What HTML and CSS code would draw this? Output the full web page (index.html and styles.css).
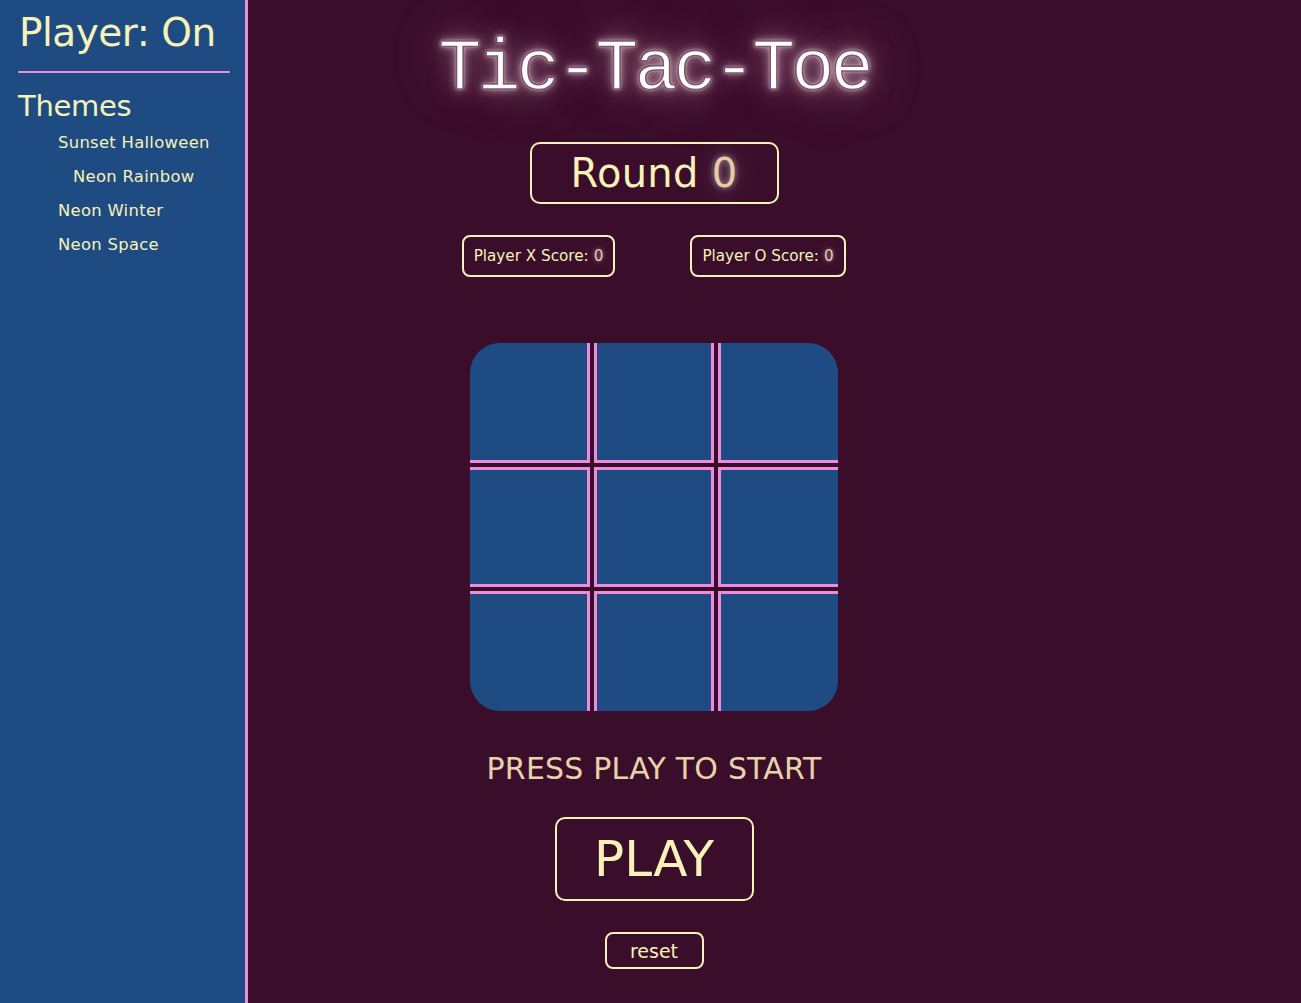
FILE: index.html
```html
<!DOCTYPE html>
<html>
<head>
<meta charset="utf-8">
<link rel="stylesheet" href="styles.css">
</head>
<body>
<div class="page">
  <aside class="sidebar">
    <div class="player">Player: On</div>
    <div class="rule"></div>
    <div class="themes-title">Themes</div>
    <ul class="themes">
      <li>Sunset Halloween</li>
      <li class="indent">Neon Rainbow</li>
      <li>Neon Winter</li>
      <li>Neon Space</li>
    </ul>
  </aside>
  <main class="main">
    <h1 class="title">Tic-Tac-Toe</h1>
    <div class="round">Round <span class="num">0</span></div>
    <div class="scores">
      <div class="score score-x">Player X Score: <span class="num-s">0</span></div>
      <div class="score score-o">Player O Score: <span class="num-s">0</span></div>
    </div>
    <div class="board">
      <div class="cell c1"></div>
      <div class="cell c2"></div>
      <div class="cell c3"></div>
      <div class="cell c4"></div>
      <div class="cell c5"></div>
      <div class="cell c6"></div>
      <div class="cell c7"></div>
      <div class="cell c8"></div>
      <div class="cell c9"></div>
    </div>
    <div class="message">PRESS PLAY TO START</div>
    <button class="play">PLAY</button>
    <button class="reset">reset</button>
  </main>
</div>
</body>
</html>
```
FILE: styles.css
```css
html, body {
  margin: 0;
  padding: 0;
  background: #3a0e2b;
  font-family: "DejaVu Sans", "Noto Sans", sans-serif;
  color: #f7f2b8;
}
.page {
  display: flex;
  min-height: 1003px;
}
.sidebar {
  flex: 0 0 245px;
  background: #1f4b83;
  border-right: 3px solid #ee8cdc;
  padding: 0 15px 0 18px;
  box-sizing: border-box;
  width: 248px;
}
.player {
  font-size: 39px;
  line-height: 1;
  padding-top: 13px;
  padding-left: 1px;
  letter-spacing: -0.5px;
}
.rule {
  height: 2px;
  background: #ee8cdc;
  margin-top: 19px;
  width: 212px;
}
.themes-title {
  font-size: 29px;
  line-height: 1;
  margin-top: 19px;
  letter-spacing: -0.3px;
}
.themes {
  list-style: none;
  margin: 5px 0 0 0;
  padding: 0 0 0 40px;
}
.themes li {
  font-size: 16.4px;
  line-height: 34px;
  letter-spacing: 0.3px;
}
.themes li.indent {
  padding-left: 15px;
}
.main {
  flex: 0 0 812px;
  display: flex;
  flex-direction: column;
  align-items: center;
}
.title {
  margin: 28px 0 0 0;
  font-family: "Liberation Mono", "Courier New", monospace;
  font-weight: 400;
  font-size: 72px;
  line-height: 84px;
  letter-spacing: -4px;
  color: #fff;
  -webkit-text-stroke: 1.6px rgba(120, 70, 95, 0.9);
  text-shadow: 0 0 3px rgba(255,255,255,0.9), 0 0 10px rgba(255,235,240,0.7), 0 0 26px rgba(255,210,225,0.5), 0 0 60px rgba(255,190,215,0.4), 0 0 110px rgba(255,190,215,0.25);
}
.round {
  margin-top: 30px;
  width: 249px;
  height: 62px;
  box-sizing: border-box;
  border: 2px solid #f7f2b8;
  border-radius: 10px;
  display: flex;
  align-items: center;
  justify-content: center;
  font-size: 40px;
  letter-spacing: 0.3px;
}
.num {
  color: #e6cba8;
  margin-left: 13px;
  text-shadow: 0 0 6px rgba(255,255,255,0.6), 0 0 25px rgba(255,230,240,0.35);
}
.scores {
  margin-top: 31px;
  display: flex;
  gap: 75px;
}
.score {
  height: 42px;
  box-sizing: border-box;
  border: 2px solid #f7f2b8;
  border-radius: 8px;
  display: flex;
  align-items: center;
  justify-content: center;
  font-size: 15.2px;
}
.score-x { width: 153px; }
.score-o { width: 156px; }
.num-s {
  color: #e6cba8;
  margin-left: 5px;
  text-shadow: 0 0 4px rgba(255,255,255,0.5), 0 0 30px rgba(255,230,240,0.4);
}
.board {
  margin-top: 66px;
  display: grid;
  grid-template-columns: repeat(3, 120px);
  grid-template-rows: repeat(3, 120px);
  gap: 4px;
  border-radius: 30px;
  overflow: hidden;
}
.cell {
  background: #1f4b83;
  border: 0 solid #ee8cdc;
  box-sizing: border-box;
}
.c1 { border-right-width: 3px; border-bottom-width: 3px; }
.c2 { border-left-width: 3px; border-right-width: 3px; border-bottom-width: 3px; }
.c3 { border-left-width: 3px; border-bottom-width: 3px; }
.c4 { border-right-width: 3px; border-top-width: 3px; border-bottom-width: 3px; }
.c5 { border-width: 3px; }
.c6 { border-left-width: 3px; border-top-width: 3px; border-bottom-width: 3px; }
.c7 { border-right-width: 3px; border-top-width: 3px; }
.c8 { border-left-width: 3px; border-right-width: 3px; border-top-width: 3px; }
.c9 { border-left-width: 3px; border-top-width: 3px; }
.message {
  margin-top: 40px;
  font-size: 30px;
  line-height: 36px;
  color: #e6d3a8;
  letter-spacing: 0.2px;
}
.play {
  margin-top: 30px;
  width: 199px;
  height: 84px;
  background: transparent;
  border: 2px solid #f7f2b8;
  border-radius: 10px;
  color: #f7f2b8;
  font-family: "DejaVu Sans", "Noto Sans", sans-serif;
  font-size: 50px;
  padding: 0;
}
.reset {
  margin-top: 31px;
  width: 99px;
  height: 37px;
  background: transparent;
  border: 2px solid #f7f2b8;
  border-radius: 8px;
  color: #f7f2b8;
  font-family: "DejaVu Sans", "Noto Sans", sans-serif;
  font-size: 19px;
  padding: 0;
}
```
